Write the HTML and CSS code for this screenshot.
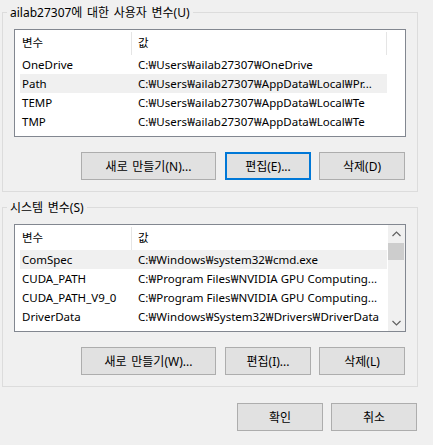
FILE: index.html
```html
<!DOCTYPE html>
<html lang="ko">
<head>
<meta charset="utf-8">
<title>환경 변수</title>
<link rel="stylesheet" href="styles.css">
</head>
<body>
<fieldset class="group">
  <legend class="group-title">ailab27307에 대한 사용자 변수(U)</legend>
  <div class="list">
    <div class="table">
      <div class="hdr">
        <div class="hcell">변수</div>
        <div class="hcell">값</div>
      </div>
      <div class="row"><div class="c1">OneDrive</div><div class="c2">C:<span class="w">₩</span>Users<span class="w">₩</span>ailab27307<span class="w">₩</span>OneDrive</div></div>
      <div class="row sel"><div class="c1">Path</div><div class="c2">C:<span class="w">₩</span>Users<span class="w">₩</span>ailab27307<span class="w">₩</span>AppData<span class="w">₩</span>Local<span class="w">₩</span>Pr...</div></div>
      <div class="row"><div class="c1">TEMP</div><div class="c2">C:<span class="w">₩</span>Users<span class="w">₩</span>ailab27307<span class="w">₩</span>AppData<span class="w">₩</span>Local<span class="w">₩</span>Te</div></div>
      <div class="row"><div class="c1">TMP</div><div class="c2">C:<span class="w">₩</span>Users<span class="w">₩</span>ailab27307<span class="w">₩</span>AppData<span class="w">₩</span>Local<span class="w">₩</span>Te</div></div>
    </div>
  </div>
  <div class="btns">
    <button class="btn wide">새로 만들기(N)...</button>
    <button class="btn norm focus">편집(E)...</button>
    <button class="btn norm last">삭제(D)</button>
  </div>
</fieldset>
<fieldset class="group second">
  <legend class="group-title">시스템 변수(S)</legend>
  <div class="list">
    <div class="table">
      <div class="hdr nodiv">
        <div class="hcell">변수</div>
        <div class="hcell">값</div>
      </div>
      <div class="row sel"><div class="c1">ComSpec</div><div class="c2">C:<span class="w">₩</span>Windows<span class="w">₩</span>system32<span class="w">₩</span>cmd.exe</div></div>
      <div class="row"><div class="c1">CUDA_PATH</div><div class="c2">C:<span class="w">₩</span>Program Files<span class="w">₩</span>NVIDIA GPU Computing...</div></div>
      <div class="row"><div class="c1">CUDA_PATH_V9_0</div><div class="c2">C:<span class="w">₩</span>Program Files<span class="w">₩</span>NVIDIA GPU Computing...</div></div>
      <div class="row"><div class="c1">DriverData</div><div class="c2">C:<span class="w">₩</span>Windows<span class="w">₩</span>System32<span class="w">₩</span>Drivers<span class="w">₩</span>DriverData</div></div>
    </div>
    <div class="sb">
      <div class="sb-arrow"><svg width="9" height="6" viewBox="0 0 9 6"><polyline points="0.5,5 4.5,1 8.5,5" fill="none" stroke="#606060" stroke-width="1.2"/></svg></div>
      <div class="sb-thumb"></div>
      <div class="sb-space"></div>
      <div class="sb-arrow"><svg width="9" height="6" viewBox="0 0 9 6"><polyline points="0.5,1 4.5,5 8.5,1" fill="none" stroke="#606060" stroke-width="1.2"/></svg></div>
    </div>
  </div>
  <div class="btns">
    <button class="btn wide">새로 만들기(W)...</button>
    <button class="btn norm">편집(I)...</button>
    <button class="btn norm last">삭제(L)</button>
  </div>
</fieldset>
<div class="footer">
  <button class="btn norm">확인</button>
  <button class="btn norm last">취소</button>
</div>
</body>
</html>
```
FILE: styles.css
```css
html, body {
  margin: 0;
}
body {
  background: #f0f0f0;
  font-family: "Noto Sans", "Noto Sans CJK KR", sans-serif;
  font-size: 11.5px;
  color: #000;
  padding: 1px 15px 0 2px;
}
.group {
  margin: 0;
  padding: 5px 11px 11px 11px;
  border: 1px solid #dcdcdc;
  min-width: 0;
}
.group.second {
  margin-top: 4px;
}
.group-title {
  margin-left: -7px;
  padding: 0 3px;
  line-height: 23px;
  height: 23px;
  font-size: 12px;
  word-spacing: 1.5px;
}
.list {
  display: flex;
  height: 106px;
  border: 1px solid #828790;
  background: #fff;
  padding-left: 5px;
}
.table {
  width: 367px;
  flex: none;
}
.hdr {
  display: grid;
  grid-template-columns: 112px 255px;
  height: 25px;
}
.hcell {
  margin-top: 2px;
  height: 23px;
  line-height: 21px;
  border-right: 1px solid #e5e5e5;
  padding-left: 2px;
}
.hcell + .hcell {
  padding-left: 6px;
}
.nodiv .hcell + .hcell {
  border-right-color: transparent;
}
.row {
  display: grid;
  grid-template-columns: 112px 255px;
  height: 19px;
  line-height: 19px;
}
.row.sel {
  background: #f0f0f0;
}
.c1, .c2 {
  white-space: nowrap;
  overflow: hidden;
}
.c1 {
  padding-left: 2px;
}
.c2 {
  padding-left: 6px;
}
.w {
  display: inline-block;
  width: 8px;
  text-align: center;
}
.sb {
  width: 17px;
  margin-left: 1px;
  background: #f0f0f0;
  display: flex;
  flex-direction: column;
}
.sb-arrow {
  height: 17px;
  display: flex;
  align-items: center;
  justify-content: center;
}
.sb-thumb {
  height: 17px;
  margin: 1px 1px 0 0;
  background: #cdcdcd;
}
.sb-space {
  flex: 1;
}
.btns {
  display: flex;
  justify-content: flex-end;
  margin-top: 15px;
  padding-right: 1px;
}
.btn {
  box-sizing: border-box;
  height: 28px;
  border: 1px solid #adadad;
  background: #e1e1e1;
  font-family: inherit;
  font-size: 12px;
  word-spacing: 1.5px;
  color: #000;
  padding: 0;
  margin: 0 8px 0 0;
}
.btn.wide {
  width: 135px;
  margin-right: 9px;
}
.btn.norm {
  width: 86px;
}
.btn.last {
  margin-right: 0;
}
.btn.focus {
  border: 2px solid #0078d7;
}
.footer {
  display: flex;
  justify-content: flex-end;
  margin-top: 16px;
  padding-right: 1px;
}
```
